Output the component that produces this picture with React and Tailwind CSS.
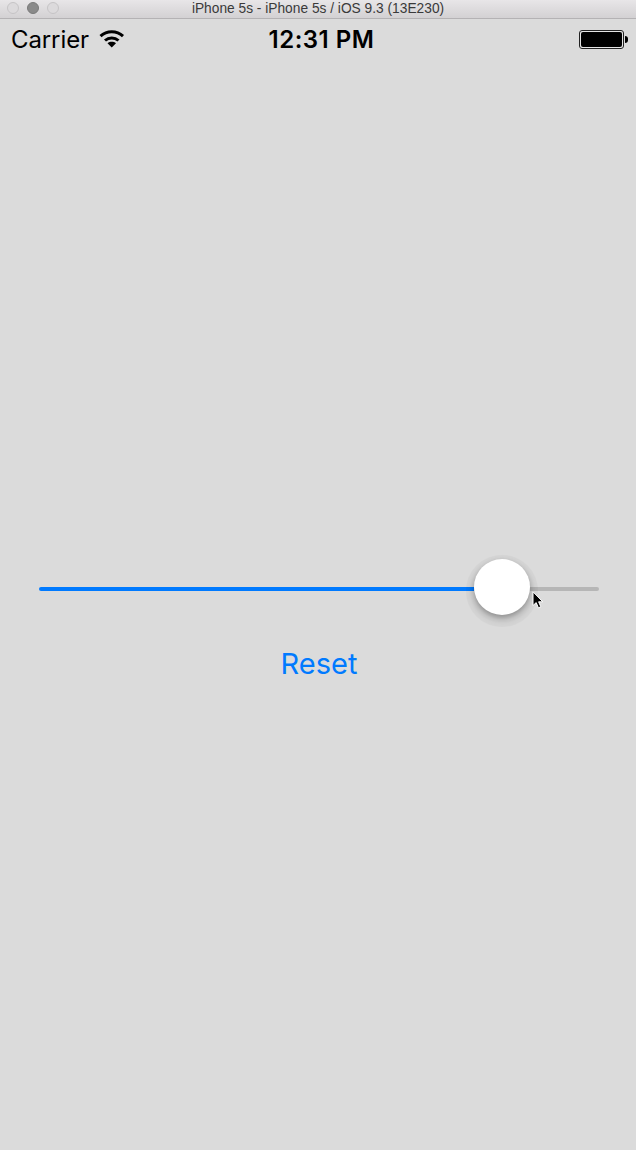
import React from "react";

const sans = "font-['Inter','Liberation_Sans',sans-serif]";

const TitleBar = () => (
  <div className="relative flex h-[19px] items-center justify-center border-b border-[#b4b2b4] bg-gradient-to-b from-[#e8e6e8] to-[#d3d1d3]">
    <div className="absolute left-[7px] top-[2px] flex gap-[8px]">
      <span className="h-[12px] w-[12px] rounded-full border border-[#c6c4c6] bg-[#dcdadc]"></span>
      <span className="h-[12px] w-[12px] rounded-full border border-[#7a7a7a] bg-[#8a8a8a]"></span>
      <span className="h-[12px] w-[12px] rounded-full border border-[#c6c4c6] bg-[#dcdadc]"></span>
    </div>
    <span className="font-['Liberation_Sans',sans-serif] text-[13.75px] leading-none text-[#3a3a3a]">
      iPhone 5s - iPhone 5s / iOS 9.3 (13E230)
    </span>
  </div>
);

const Wifi = () => (
  <svg width="26" height="19" viewBox="0 0 26 19" fill="none" className="mb-[2px]">
    <path d="M1.5 7.2C7.8 1.4 17.7 1.4 24 7.2" stroke="black" strokeWidth="3" />
    <path d="M6 11.5C9.9 8 15.6 8 19.5 11.5" stroke="black" strokeWidth="3" />
    <path d="M12.75 18.5L8.5 14.2C11 12.3 14.5 12.3 17 14.2Z" fill="black" />
  </svg>
);

const StatusBar = () => (
  <div className="flex h-[40px] items-center justify-between pl-[11px] pr-[8px] pt-[1px]">
    <div className={`flex w-[150px] items-center gap-[10px] ${sans} text-[24px] leading-none tracking-[-0.1px] text-black`}>
      <span>Carrier</span>
      <Wifi />
    </div>
    <span className={`${sans} ml-[4px] text-[24px] font-semibold leading-none tracking-[0.5px] text-black`}>12:31 PM</span>
    <div className="flex w-[150px] items-center justify-end">
      <div className="h-[19px] w-[45px] rounded-[3px] border border-[#222] bg-[#e4e4e4] p-[1px]">
        <div className="h-full w-full rounded-[2px] bg-black"></div>
      </div>
      <div className="ml-[1px] h-[7px] w-[3px] rounded-r-sm bg-black"></div>
    </div>
  </div>
);

const Slider = () => (
  <div className="relative flex items-center pl-[39px] pr-[37px]">
    <div className="h-[4px] flex-1 rounded-l-full bg-[#007aff]"></div>
    <div className="z-10 -mb-[24px] -mt-[28px] h-[56px] w-[56px] shrink-0 rounded-full bg-white shadow-[0_3px_5px_rgba(0,0,0,0.28),0_4px_1px_8px_rgba(0,0,0,0.04),0_4px_3px_4px_rgba(0,0,0,0.03)]"></div>
    <div className="h-[4px] w-[69px] rounded-r-full bg-[#b6b6b6]"></div>
    <svg width="12" height="18" viewBox="0 0 12 18" className="absolute left-[532px] top-[4px] z-20">
      <path d="M1 0.8V14.5L4.2 11.6L6.4 16.8L8.8 15.8L6.6 10.8H10.8Z" fill="black" stroke="white" strokeWidth="1" />
    </svg>
  </div>
);

export default function App() {
  return (
    <div className="flex h-[1150px] w-[636px] flex-col overflow-hidden bg-[#dbdbdb]">
      <TitleBar />
      <StatusBar />
      <main className="flex flex-1 flex-col pt-[528px]">
        <Slider />
        <button className={`ml-[2px] mt-[55px] self-center ${sans} text-[29px] leading-[36px] text-[#007aff]`}>Reset</button>
      </main>
    </div>
  );
}
